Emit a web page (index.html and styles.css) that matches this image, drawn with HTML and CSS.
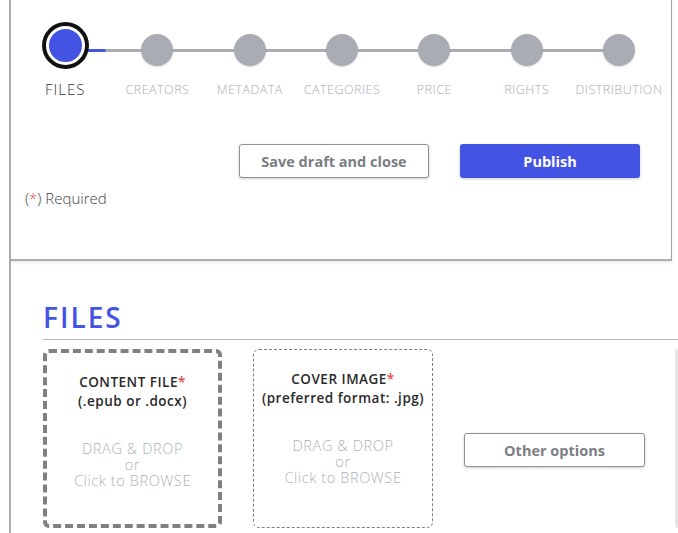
FILE: index.html
```html
<!DOCTYPE html>
<html lang="en">
<head>
  <meta charset="UTF-8">
  <title>New book</title>
  <link rel="stylesheet" href="styles.css">
</head>
<body>
  <div class="page">
    <div class="top-card">
      <ol class="stepper">
        <li class="step active"><span class="dot"></span><span class="step-label">FILES</span></li>
        <li class="step"><span class="dot"></span><span class="step-label">CREATORS</span></li>
        <li class="step"><span class="dot"></span><span class="step-label">METADATA</span></li>
        <li class="step"><span class="dot"></span><span class="step-label">CATEGORIES</span></li>
        <li class="step"><span class="dot"></span><span class="step-label">PRICE</span></li>
        <li class="step"><span class="dot"></span><span class="step-label">RIGHTS</span></li>
        <li class="step"><span class="dot"></span><span class="step-label">DISTRIBUTION</span></li>
      </ol>

      <div class="actions">
        <button class="btn btn-outline">Save draft and close</button>
        <button class="btn btn-primary">Publish</button>
      </div>

      <p class="required">(<span class="star">*</span>) Required</p>
    </div>

    <section class="files">
      <h2>FILES</h2>
      <div class="files-row">
        <div class="dropzone dropzone-main">
          <p class="dz-title">CONTENT FILE<span class="star">*</span><br>(.epub or .docx)</p>
          <p class="dz-hint">DRAG &amp; DROP<br>or<br>Click to BROWSE</p>
        </div>
        <div class="dropzone">
          <p class="dz-title">COVER IMAGE<span class="star">*</span><br>(preferred format: .jpg)</p>
          <p class="dz-hint">DRAG &amp; DROP<br>or<br>Click to BROWSE</p>
        </div>
        <div class="other">
          <button class="btn btn-outline btn-other">Other options</button>
        </div>
        <div class="side-panel"></div>
      </div>
    </section>
  </div>
</body>
</html>
```

FILE: styles.css
```css
body {
  margin: 0;
  background-color: #fff;
  font-family: 'Open Sans', sans-serif;
  overflow: hidden;
}

.page {
  margin-left: 9px;
  border-left: 2px solid #acafb6;
  height: 533px;
}

.top-card {
  width: 661px;
  height: 261px;
  box-sizing: border-box;
  border-right: 1px solid #9ea1a8;
  border-bottom: 2px solid #a9acb3;
  box-shadow: 0 2px 3px rgba(0, 0, 0, 0.08);
  padding-top: 34px;
}

/* stepper */
.stepper {
  list-style: none;
  margin: 0;
  padding: 0 0 0 8px;
  display: grid;
  grid-template-columns: repeat(7, 92.3px);
}

.step {
  position: relative;
  display: flex;
  flex-direction: column;
  align-items: center;
}

.step::after {
  content: "";
  position: absolute;
  top: 15px;
  left: 50%;
  width: 100%;
  height: 3px;
  background-color: #a9acb3;
  z-index: 0;
}

.step:last-child::after {
  display: none;
}

.step.active::after {
  background: linear-gradient(to right, #4353e3 0, #4353e3 40px, #a9acb3 41px);
}

.dot {
  position: relative;
  z-index: 1;
  width: 32px;
  height: 32px;
  border-radius: 50%;
  background-color: #a9acb3;
  box-shadow: 0 1px 2px rgba(0, 0, 0, 0.15);
}

.step.active .dot {
  width: 33px;
  height: 33px;
  margin-top: -8px;
  background-color: #4353e3;
  border: 3px solid #fff;
  box-shadow: 0 0 0 4px #111;
}

.step-label {
  margin-top: 17px;
  font-size: 12.5px;
  font-weight: 300;
  letter-spacing: 0.5px;
  color: #a9acb3;
  white-space: nowrap;
  line-height: 14px;
}

.step.active .step-label {
  margin-top: 17px;
  font-size: 15px;
  letter-spacing: 1px;
  color: #333;
}

/* buttons */
.actions {
  display: flex;
  justify-content: flex-end;
  gap: 31px;
  margin-top: 47px;
  padding-right: 31px;
}

.btn {
  height: 34px;
  border-radius: 3px;
  font-family: 'Open Sans', sans-serif;
  font-size: 14.5px;
  font-weight: 700;
  cursor: pointer;
  box-shadow: 0 1px 3px rgba(0, 0, 0, 0.2);
}

.btn-outline {
  width: 190px;
  background-color: #fff;
  border: 1px solid #8e9197;
  color: #7b7e84;
}

.btn-primary {
  width: 180px;
  background-color: #4353e3;
  border: none;
  color: #fff;
}

.required {
  margin: 10px 0 0 14px;
  font-size: 15px;
  font-weight: 300;
  color: #444;
}

.star {
  color: #e5484d;
}

/* files section */
.files {
  padding: 40px 0 0 32px;
}

.files h2 {
  margin: 0;
  padding-bottom: 6px;
  border-bottom: 1px solid #b3b6bc;
  font-size: 28px;
  font-weight: 600;
  letter-spacing: 2px;
  line-height: 32px;
  color: #4353e3;
}

.files-row {
  display: flex;
  gap: 31px;
  margin-top: 9px;
  align-items: stretch;
}

.dropzone {
  flex-shrink: 0;
  width: 180px;
  height: 179px;
  box-sizing: border-box;
  border: 1px dashed #808080;
  border-radius: 6px;
  text-align: center;
  padding-top: 20px;
}

.dropzone-main {
  width: 179px;
  border: 4px dashed #808080;
  padding-top: 20px;
}

.dz-title {
  margin: 0;
  font-size: 13.5px;
  font-weight: 600;
  letter-spacing: 0.5px;
  line-height: 19px;
  color: #2a2a2a;
}

.dz-hint {
  margin: 30px 0 0;
  font-size: 14.5px;
  font-weight: 300;
  letter-spacing: 0.6px;
  line-height: 16px;
  color: #aeb1b7;
}

.other {
  flex-shrink: 0;
  display: flex;
  align-items: center;
  padding-top: 23px;
}

.btn-other {
  width: 181px;
}

.side-panel {
  flex-shrink: 0;
  margin-left: -1px;
  width: 3px;
  background-color: #e6e6e6;
  border-radius: 4px 0 0 4px;
}
```
